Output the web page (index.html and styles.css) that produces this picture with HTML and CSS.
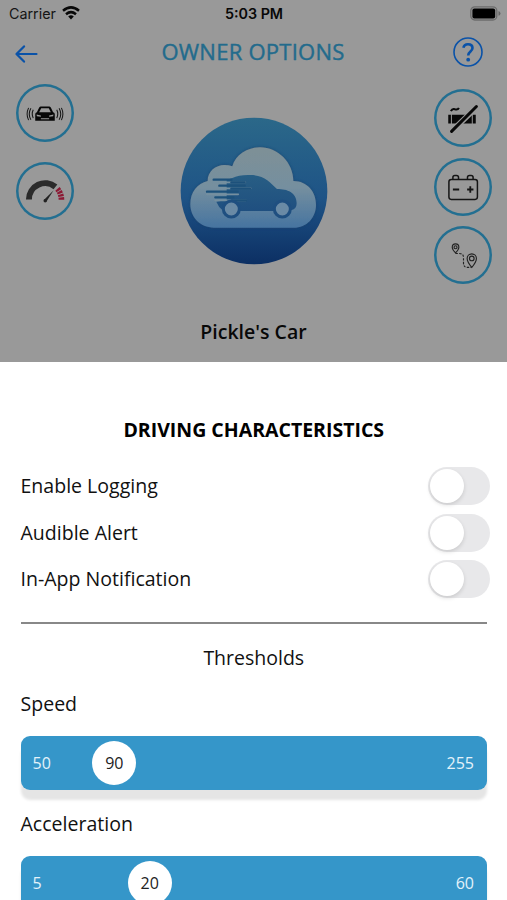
FILE: index.html
```html
<!DOCTYPE html>
<html lang="en">
<head>
<meta charset="utf-8">
<title>Owner Options</title>
<link rel="stylesheet" href="styles.css">
</head>
<body>
<main class="screen">
  <section class="backdrop">
    <div class="status">
      <div class="carrier">Carrier
        <svg class="wifi" width="18" height="14" viewBox="0 0 18 14"><g fill="none" stroke="#080808" stroke-width="2.5"><path d="M1 4.8Q9-2 17 4.8"/><path d="M4 8.2Q9 4 14 8.2"/></g><path d="M6.2 10.5Q9 8.1 11.8 10.5L9 13.6Z" fill="#080808"/></svg>
      </div>
      <div class="time">5:03 PM</div>
      <svg class="battery" width="31" height="15" viewBox="0 0 31 15"><rect x=".8" y=".8" width="26" height="13.2" rx="4" fill="none" stroke="#6c6c6c" stroke-width="1.3"/><rect x="2.4" y="2.4" width="22.800" height="10" rx="2" fill="#000"/><path d="M28.5 5q2 .6 2 2.4t-2 2.4z" fill="#666"/></svg>
    </div>
    <header class="header">
      <svg width="23" height="18" viewBox="0 0 23 18" fill="none" stroke="#0a52a8" stroke-width="2.2" stroke-linecap="round" stroke-linejoin="round"><path d="M21.5 9H1.5M9 1.4L1.5 9L9 16.6"/></svg>
      <h1 class="title">OWNER OPTIONS</h1>
      <svg width="30" height="30" viewBox="0 0 30 30"><circle cx="15" cy="15" r="14" fill="none" stroke="#0a52a8" stroke-width="1.6"/><path d="M10.4 10.8C10.8 8.3 12.6 7.2 15 7.2c2.7 0 4.5 1.5 4.5 3.8 0 3.4-4.3 3.5-4.3 7.4" fill="none" stroke="#0a52a8" stroke-width="2.6"/><circle cx="15.2" cy="22.7" r="1.900" fill="#0a52a8"/></svg>
    </header>
    <div class="hero">
      <div class="rail">
        <div class="badge">
          <svg width="58" height="58" viewBox="0 0 175 175"><g fill="#070707"><path d="M70 71q2-3 5-3h25q3 0 5 3l7 14 3 2q2 2 2 5v19H58V92q0-3 2-5l3-2z"/><path d="M76 73h23l6 12H70z" fill="#999"/><path d="M62 92l13 3v4l-12-2zM113 92l-13 3v4l12-2zM75 103h25v3H75z" fill="#999"/></g><g fill="none" stroke="#181818" stroke-width="3.200"><path d="M52 78q-6 12 0 25M45 73q-10 17 0 35M38 72q-9 18 0 37M123 78q6 12 0 25M130 73q10 17 0 35M137 72q9 18 0 37"/></g></svg>
        </div>
        <div class="badge">
          <svg width="58" height="58" viewBox="0 0 175 175"><path d="M39 113A49 49 0 0 1 119 75" fill="none" stroke="#2b2b2b" stroke-width="18"/><path d="M125 81A50 50 0 0 1 137 116" fill="none" stroke="#8c1934" stroke-width="17" stroke-dasharray="7 2.5"/><path d="M84 115L113 86L91 121Z" fill="#222"/><circle cx="88" cy="117" r="5" fill="#222"/></svg>
        </div>
      </div>
      <svg class="logo" width="148" height="148" viewBox="30 37 444 444">
        <defs>
          <linearGradient id="disc" x1="0" y1="0" x2="0" y2="1"><stop stop-color="#2b6889"/><stop offset=".55" stop-color="#1e5386"/><stop offset="1" stop-color="#0c2f63"/></linearGradient>
          <linearGradient id="cloud" x1="0" y1="0" x2="0" y2="1"><stop stop-color="#7e9096"/><stop offset=".5" stop-color="#758f9f"/><stop offset="1" stop-color="#4674a0"/></linearGradient>
          <linearGradient id="car" x1="0" y1="0" x2="0" y2="1"><stop stop-color="#285e84"/><stop offset="1" stop-color="#1f4f80"/></linearGradient>
          <filter id="shade" x="-20%" y="-20%" width="140%" height="140%"><feDropShadow dx="0" dy="0" stdDeviation="5" flood-color="#143f69" flood-opacity=".8"/></filter>
        </defs>
        <circle cx="252" cy="259" r="220" fill="url(#disc)"/>
        <path d="M132 369C90 369 61 337 61 299C61 262 82 237 113 229C113 200 137 181 163 181Q176 181 187 185C196 151 232 128 270 128C325 128 370 175 370 229C412 229 438 262 438 300C438 339 410 369 371 369Z" fill="url(#cloud)" filter="url(#shade)"/>
        <path d="M187 220Q207 210 240 211C283 211 299 232 321 253C352 253 380 263 380 296Q380 315 362 317L312 319H208L158 317Q145 307 139 291L170 286V226Z" fill="url(#car)"/>
        <g stroke="#758f9f" stroke-width="5" stroke-linecap="round"><path d="M128 233H226M145 251H242M110 269H205M135 287H228"/></g>
        <g stroke="#1d517b" stroke-width="7" stroke-linecap="round"><path d="M131 225H184M184 233H224M148 243H224M184 252H240M111 261H203M136 278H190M186 287H228"/></g>
        <g fill="#6a8aa5" stroke="#1f4f80" stroke-width="9"><circle cx="184" cy="313" r="24"/><circle cx="337" cy="313" r="24"/></g>
      </svg>
      <div class="rail rail-right">
        <div class="badge">
          <svg width="58" height="58" viewBox="0 0 175 175"><path d="M43 78h8v26h-8zM54 78h60v26H54zM117 78h9v26h-9z" fill="#080808"/><path d="M51 67q4-9 12-6 9 3 12-4" fill="none" stroke="#080808" stroke-width="6"/><path d="M54 127L132 51" stroke="#999" stroke-width="17"/><path d="M53 128L128 53" stroke="#080808" stroke-width="9" stroke-linecap="round"/></svg>
        </div>
        <div class="badge">
          <svg width="58" height="58" viewBox="0 0 175 175" fill="none" stroke="#151515" stroke-width="4.500"><rect x="45" y="65" width="86" height="60" rx="7"/><path d="M57 64v-5q0-6 6-6h5q6 0 6 6v5M101 64v-5q0-6 6-6h5q6 0 6 6v5"/><path d="M57 95h19M100 95h19M109.500 85v20" stroke-width="5.500"/></svg>
        </div>
        <div class="badge">
          <svg width="58" height="58" viewBox="0 0 175 175" fill="none" stroke="#222" stroke-width="3.400"><path d="M65 81Q55 71 55 64a10 10 0 0 1 20 0q0 7-10 17z"/><circle cx="65" cy="64" r="4.500"/><path d="M114 125Q100 108 100 98a14 14 0 0 1 28 0q0 10-14 27z"/><circle cx="114" cy="98" r="7"/><path d="M65 83H77Q89 83 89 95V112Q89 125 101 125H113" stroke-dasharray="7 4"/></svg>
        </div>
      </div>
    </div>
    <h2 class="car-name">Pickle's Car</h2>
  </section>
  <section class="sheet">
    <h2 class="sheet-title">DRIVING CHARACTERISTICS</h2>
    <div class="option"><span>Enable Logging</span><span class="switch"></span></div>
    <div class="option"><span>Audible Alert</span><span class="switch"></span></div>
    <div class="option"><span>In-App Notification</span><span class="switch"></span></div>
    <hr class="rule">
    <h3 class="subtitle">Thresholds</h3>
    <div class="label">Speed</div>
    <div class="slider"><span>50</span><span class="thumb speed">90</span><span class="max">255</span></div>
    <div class="label second">Acceleration</div>
    <div class="slider"><span>5</span><span class="thumb acceleration">20</span><span class="max">60</span></div>
  </section>
</main>
</body>
</html>
```
FILE: styles.css
```css
* { box-sizing: border-box; }
body { margin: 0; background: #fff; color: #111; font-family: "Open Sans", sans-serif; }
h1, h2, h3 { margin: 0; }
svg { display: block; flex: none; }
.screen { width: 507px; height: 900px; overflow: hidden; }
.backdrop { height: 362px; background: #999; }
.status { height: 28px; padding: 0 8px 0 9px; display: grid; grid-template-columns: 1fr auto 1fr; align-items: center; font: 14.3px/28px Inter, sans-serif; color: #151515; }
.carrier { display: flex; align-items: center; gap: 6px; }
.wifi { margin-bottom: 2px; }
.time { font-weight: 600; color: #080808; }
.battery { justify-self: end; margin-bottom: 1px; margin-right: -2px; }
.header { height: 48px; padding: 0 24px 0 15px; display: grid; grid-template-columns: 38px 1fr 30px; align-items: center; }
.header > svg:first-child { margin-top: 4px; }
.title { text-align: center; font-size: 22px; line-height: 46px; height: 48px; letter-spacing: .25px; font-weight: 500; color: #236b8c; -webkit-text-stroke: .4px #236b8c; }
.hero { height: 236px; padding: 0 15px 0 16px; display: flex; justify-content: space-between; align-items: flex-start; }
.rail { padding-top: 8px; display: grid; gap: 20px; }
.rail-right { padding-top: 13px; gap: 10.5px; }
.badge { width: 58px; height: 58px; border-radius: 50%; box-shadow: inset 0 0 0 2.5px #236f91; }
.logo { margin-top: 41px; }
.car-name { text-align: center; font-size: 19.5px; line-height: 40px; font-weight: 600; color: #080808; }
.sheet { padding: 48px 20px 0 20.5px; font-size: 19.55px; }
.sheet-title { height: 53px; text-align: center; font-size: 19.5px; line-height: 40px; font-weight: 700; color: #000; }
.option { height: 46.5px; display: flex; align-items: center; justify-content: space-between; }
.option span:first-child { margin-top: -1px; }
.switch { width: 62px; height: 38px; margin-right: -2.5px; border-radius: 19px; padding: 2px; background: #e8e8ea; }
.switch::before { content: ""; display: block; width: 34px; height: 34px; border-radius: 50%; background: #fff; box-shadow: 0 2px 4px #0002; }
.rule { height: 2px; margin: 19.5px 0 14px; border: 0; background: #888; }
.subtitle { text-align: center; font-size: 19.5px; line-height: 40px; font-weight: 400; }
.label { height: 58px; padding-top: 6px; line-height: 40px; }
.second { height: 66px; padding-top: 14px; }
.slider { height: 54px; border-radius: 9px; padding: 0 13px 0 12px; display: flex; align-items: center; background: #3596c9; color: #e3f2fa; font-size: 16px; box-shadow: 0 10px 3px #e5e5e5; }
.thumb { width: 44px; height: 44px; border-radius: 50%; display: grid; place-items: center; background: #fff; color: #222; }
.speed { margin-left: 41.5px; }
.acceleration { margin-left: 86px; }
.max { margin-left: auto; }
```
